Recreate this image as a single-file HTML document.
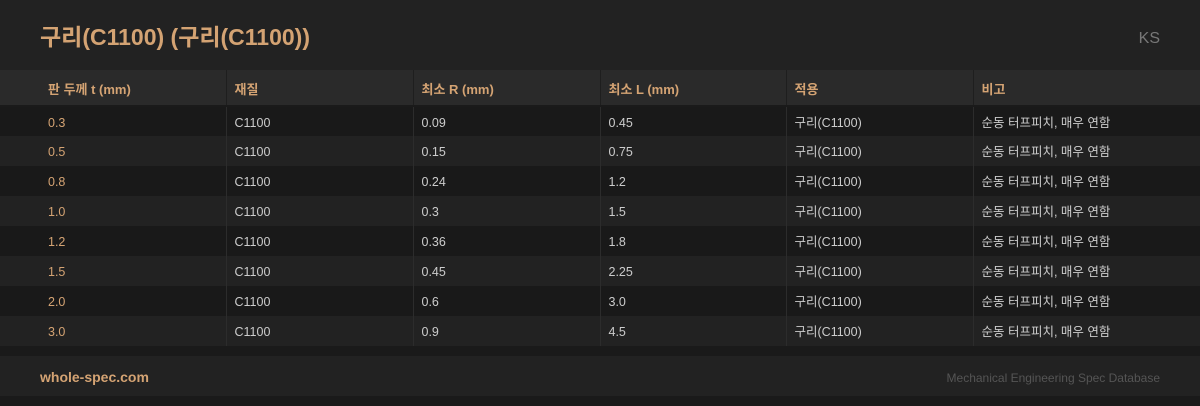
<!DOCTYPE html>
<html><head><meta charset="utf-8"><style>
*{margin:0;padding:0;box-sizing:border-box}
body{width:1200px;height:406px;background:#1a1a1a;font-family:"Liberation Sans","Noto Sans CJK KR",sans-serif;overflow:hidden;position:relative}
.hd{position:absolute;left:0;top:0;width:1200px;height:70px;background:#222}
.hd h1{position:absolute;left:40px;top:20px;font-size:23px;font-weight:bold;color:#d4a373;line-height:34px}
.hd .ks{position:absolute;right:40px;top:30px;font-size:16px;color:#777}
table{position:absolute;left:0;top:70px;border-collapse:collapse;width:1200px;table-layout:fixed}
th{height:36px;background:#2a2a2a;color:#d4a373;font-size:13px;font-weight:bold;text-align:left;padding:4px 0 0 8px;border-bottom:2px solid #1a1a1a;border-left:1px solid #1e1e1e;line-height:16px}
td{height:30px;font-size:12.5px;color:#ccc;padding:2px 0 0 8px;border-left:1px solid #2c2c2c;line-height:16px}
th:first-child{padding-left:48px;border-left:none}td:first-child{padding-left:48px;color:#d4a373;border-left:none}
tr:nth-child(odd) td{background:#191919}
tr:nth-child(even) td{background:#222}
.ft{position:absolute;left:0;top:356px;width:1200px;height:40px;background:#222}
.ft b{position:absolute;left:40px;top:13px;color:#d4a373;font-size:14px}
.ft span{position:absolute;right:40px;top:15px;color:#555;font-size:12px}
</style></head><body>
<div class="hd"><h1>구리(C1100) (구리(C1100))</h1><div class="ks">KS</div></div>
<table>
<colgroup><col style="width:226px"><col style="width:187px"><col style="width:187px"><col style="width:186px"><col style="width:187px"><col style="width:227px"></colgroup>
<thead><tr><th>판 두께 t (mm)</th><th>재질</th><th>최소 R (mm)</th><th>최소 L (mm)</th><th>적용</th><th>비고</th></tr></thead>
<tbody>
<tr><td>0.3</td><td>C1100</td><td>0.09</td><td>0.45</td><td>구리(C1100)</td><td>순동 터프피치, 매우 연함</td></tr>
<tr><td>0.5</td><td>C1100</td><td>0.15</td><td>0.75</td><td>구리(C1100)</td><td>순동 터프피치, 매우 연함</td></tr>
<tr><td>0.8</td><td>C1100</td><td>0.24</td><td>1.2</td><td>구리(C1100)</td><td>순동 터프피치, 매우 연함</td></tr>
<tr><td>1.0</td><td>C1100</td><td>0.3</td><td>1.5</td><td>구리(C1100)</td><td>순동 터프피치, 매우 연함</td></tr>
<tr><td>1.2</td><td>C1100</td><td>0.36</td><td>1.8</td><td>구리(C1100)</td><td>순동 터프피치, 매우 연함</td></tr>
<tr><td>1.5</td><td>C1100</td><td>0.45</td><td>2.25</td><td>구리(C1100)</td><td>순동 터프피치, 매우 연함</td></tr>
<tr><td>2.0</td><td>C1100</td><td>0.6</td><td>3.0</td><td>구리(C1100)</td><td>순동 터프피치, 매우 연함</td></tr>
<tr><td>3.0</td><td>C1100</td><td>0.9</td><td>4.5</td><td>구리(C1100)</td><td>순동 터프피치, 매우 연함</td></tr>
</tbody></table>
<div class="ft"><b>whole-spec.com</b><span>Mechanical Engineering Spec Database</span></div>
</body></html>
